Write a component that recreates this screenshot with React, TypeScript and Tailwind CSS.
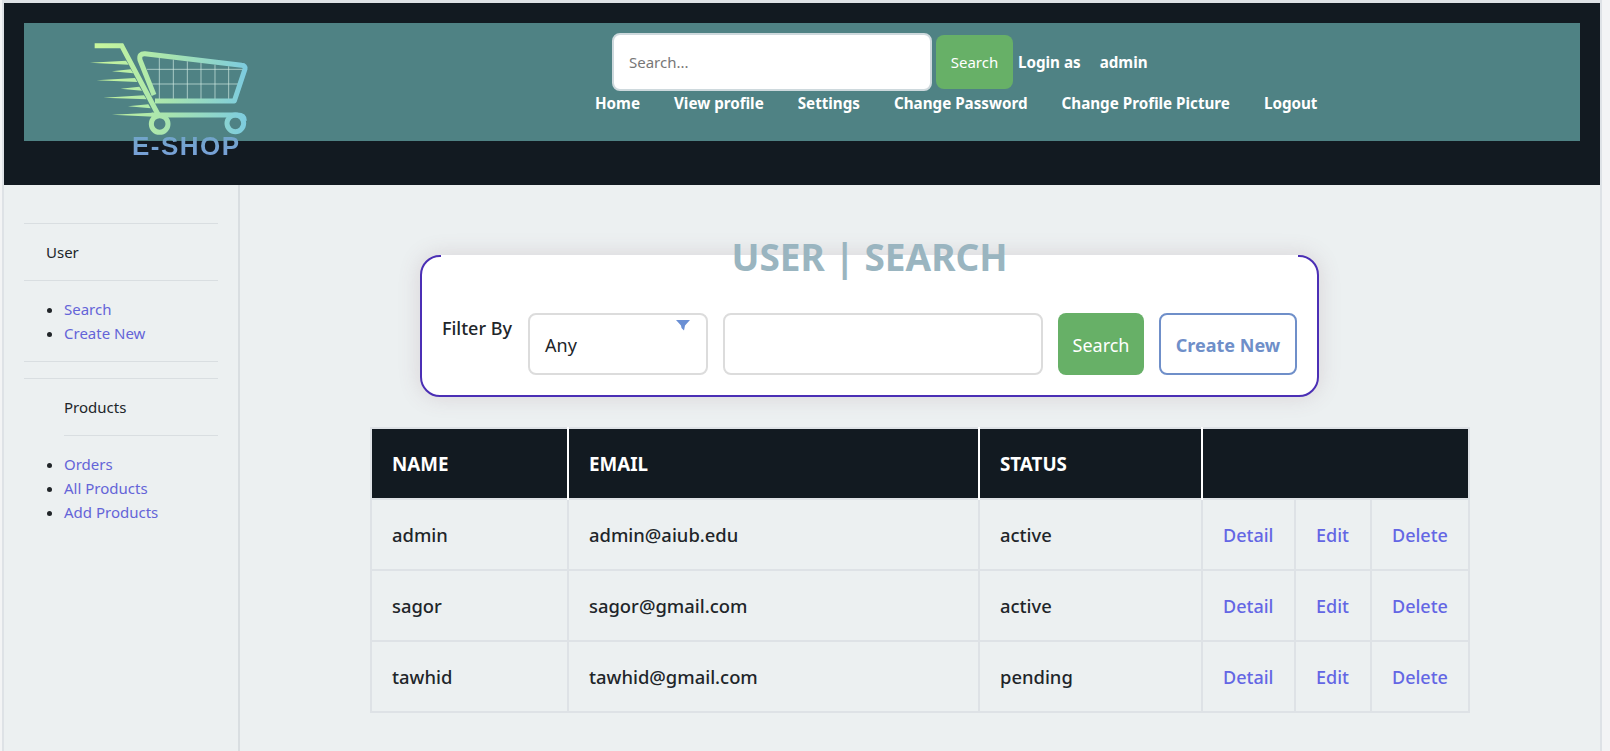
const font = "font-['Noto_Sans','Open_Sans',sans-serif]";

const navLinks = ["Home", "View profile", "Settings", "Change Password", "Change Profile Picture", "Logout"];

const users = [
  { name: "admin", email: "admin@aiub.edu", status: "active" },
  { name: "sagor", email: "sagor@gmail.com", status: "active" },
  { name: "tawhid", email: "tawhid@gmail.com", status: "pending" },
];

const Logo = () => (
  <>
    <svg
      viewBox="264 120 520 300"
      width="173.33"
      height="100"
      fill="none"
      className="absolute left-[84px] top-[37px]"
    >
      <defs>
        <linearGradient id="cart" gradientUnits="userSpaceOnUse" x1="284" y1="0" x2="745" y2="0">
          <stop offset="0" stopColor="#c9f79c" />
          <stop offset="0.5" stopColor="#a6e3b0" />
          <stop offset="1" stopColor="#7ccbe0" />
        </linearGradient>
        <clipPath id="basket">
          <path d="M430 168 L735 205 L705 300 L465 300 Z" />
        </clipPath>
      </defs>
      <g clipPath="url(#basket)" stroke="#d5efe6" strokeWidth="2">
        <path d="M478 160V300M520 160V300M562 160V300M603 160V300M645 160V300M686 160V300" />
        <path d="M425 208H740M425 252H740" />
      </g>
      <path d="M284 137H365L475 345" stroke="url(#cart)" strokeWidth="15" />
      <path
        d="M465 303H703L735 207Q737 197 725 196L435 161Q416 160 420 180L462 285"
        stroke="url(#cart)"
        strokeWidth="15"
        strokeLinejoin="round"
      />
      <path d="M455 345H712Q733 345 733 362" stroke="url(#cart)" strokeWidth="15" />
      <circle cx="479" cy="372" r="25" stroke="url(#cart)" strokeWidth="15" />
      <circle cx="706" cy="370" r="25" stroke="url(#cart)" strokeWidth="15" />
      <path
        d="M270 188L378 182L386 194ZM336 214L392 208L400 220ZM290 241L405 234L412 246ZM362 266L418 260L426 272ZM310 293L432 286L440 298ZM384 319L445 313L452 325ZM336 344L458 338L462 350Z"
        fill="url(#cart)"
      />
    </svg>
    <span className="absolute left-[128px] top-[127px] bg-gradient-to-b from-[#6fa6c4] to-[#7a9fdc] bg-clip-text font-['Liberation_Sans',sans-serif] text-[26px] leading-[32px] font-bold tracking-[1.5px] text-transparent">
      E-SHOP
    </span>
  </>
);

const Header = () => (
  <header className="h-[182px] bg-[#121a21] px-5 pt-5">
    <div className="h-[118px] bg-[#4f8284] pl-[571px] pt-[10px] text-[15.2px] font-bold text-white">
      <div className="flex items-center pl-[17px]">
        <input
          placeholder="Search..."
          className="h-[58px] w-[320px] rounded-lg border-2 border-[#ced9dd] bg-white px-[15px] text-[15px] font-normal text-[#333] placeholder:text-[#777] outline-none"
        />
        <button className="ml-1 h-[54px] w-[77px] rounded-lg bg-[#67b067] text-[15px] font-normal">Search</button>
        <span className="ml-[5px]">Login as</span>
        <span className="ml-[19px]">admin</span>
      </div>
      <nav className="flex gap-[34px] leading-[24px]">
        {navLinks.map((l) => (
          <a key={l}>{l}</a>
        ))}
      </nav>
    </div>
  </header>
);

const Sidebar = () => (
  <aside className="w-[236px] shrink-0 border-r-2 border-[#d9dee1] pl-5 pr-5 pt-[38px] text-[15px] text-[#212529]">
    <hr className="border-[#d9dee1]" />
    <div className="flex h-[56px] items-center pl-[22px]">User</div>
    <hr className="border-[#d9dee1]" />
    <ul className="mt-4 mb-4 list-disc pl-10 leading-6 text-[#6464d8]">
      <li className="marker:text-[#212529]">Search</li>
      <li className="marker:text-[#212529]">Create New</li>
    </ul>
    <hr className="border-[#d9dee1]" />
    <div className="mt-4 pl-10">
      <hr className="-ml-10 border-[#d9dee1]" />
      <div className="flex h-[56px] items-center">Products</div>
      <hr className="border-[#d9dee1]" />
    </div>
    <ul className="mt-4 list-disc pl-10 leading-6 text-[#6464d8]">
      <li className="marker:text-[#212529]">Orders</li>
      <li className="marker:text-[#212529]">All Products</li>
      <li className="marker:text-[#212529]">Add Products</li>
    </ul>
  </aside>
);

const FilterCard = () => (
  <div className="relative ml-[180px] mt-[70px] h-[142px] w-[899px] rounded-[20px] border-2 border-[#4b2fb5] bg-white shadow-[0_0_22px_rgba(120,70,90,0.17)]">
    <div className="absolute left-[19px] right-[19px] -top-[2px] h-[2px] bg-white" />
    <h1 className="absolute inset-x-0 -top-[22px] text-center text-[37px] leading-[44px] font-bold text-[#9ab5c0]">
      USER | SEARCH
    </h1>
    <div className="flex pl-[20px] pt-[56px]">
      <span className="w-[86px] text-[18px] leading-[30px] font-medium text-[#212529]">Filter By</span>
      <div className="relative h-[62px] w-[180px] rounded-lg border-2 border-[#dcdcdc] pl-[15px] pt-[17px] text-[18px] leading-[26px] text-[#212529]">
        Any
        <svg viewBox="0 0 14 11" width="14" height="11" className="absolute right-[16px] top-[5px]">
          <path d="M0 0H14L9 5.5L8 10.5L5.5 8L5 5.5Z" fill="#6a8fd4" />
        </svg>
      </div>
      <input className="ml-[15px] h-[62px] w-[320px] rounded-lg border-2 border-[#dcdcdc] outline-none" />
      <button className="ml-[15px] h-[62px] w-[86px] rounded-lg bg-[#67b067] pt-[2px] text-[18px] text-white">Search</button>
      <button className="ml-[15px] h-[62px] w-[138px] rounded-lg border-2 border-[#6f8fc9] pt-[2px] text-[18px] font-bold text-[#6f8fc9]">
        Create New
      </button>
    </div>
  </div>
);

const UserTable = () => {
  const cell = "border-2 border-[#dee2e6] px-5";
  const head = "border-x-2 border-white first:border-l-0 last:border-r-0 bg-[#121a21] px-5 text-left text-[18.8px] font-bold text-white";
  const link = `${cell} text-[18px] font-medium text-[#6366e4]`;
  return (
    <table className="ml-[130px] mt-[30px] w-[1098px] table-fixed border-collapse border-2 border-[#dee2e6] text-[18.4px] leading-[24px] text-[#212529]">
      <colgroup>
        <col className="w-[197px]" />
        <col className="w-[411px]" />
        <col className="w-[223px]" />
        <col className="w-[93px]" />
        <col className="w-[76px]" />
        <col className="w-[98px]" />
      </colgroup>
      <thead>
        <tr className="h-[71px]">
          <th className={head}>NAME</th>
          <th className={head}>EMAIL</th>
          <th className={head}>STATUS</th>
          <th colSpan={3} className={head} />
        </tr>
      </thead>
      <tbody>
        {users.map((u) => (
          <tr key={u.name} className="h-[71px] font-medium">
            <td className={cell}>{u.name}</td>
            <td className={cell}>{u.email}</td>
            <td className={cell}>{u.status}</td>
            <td className={link}>Detail</td>
            <td className={link}>Edit</td>
            <td className={link}>Delete</td>
          </tr>
        ))}
      </tbody>
    </table>
  );
};

export default function App() {
  return (
    <div className={`h-[751px] overflow-hidden bg-[#f3f4f5] pl-[2px] ${font}`}>
      <div className="flex h-full w-[1600px] flex-col border-x-2 border-t-[3px] border-[#dee2e6] bg-[#ecf0f1]">
        <div className="relative">
          <Header />
          <Logo />
        </div>
        <div className="flex flex-1">
          <Sidebar />
          <main className="flex-1">
            <FilterCard />
            <UserTable />
          </main>
        </div>
      </div>
    </div>
  );
}
